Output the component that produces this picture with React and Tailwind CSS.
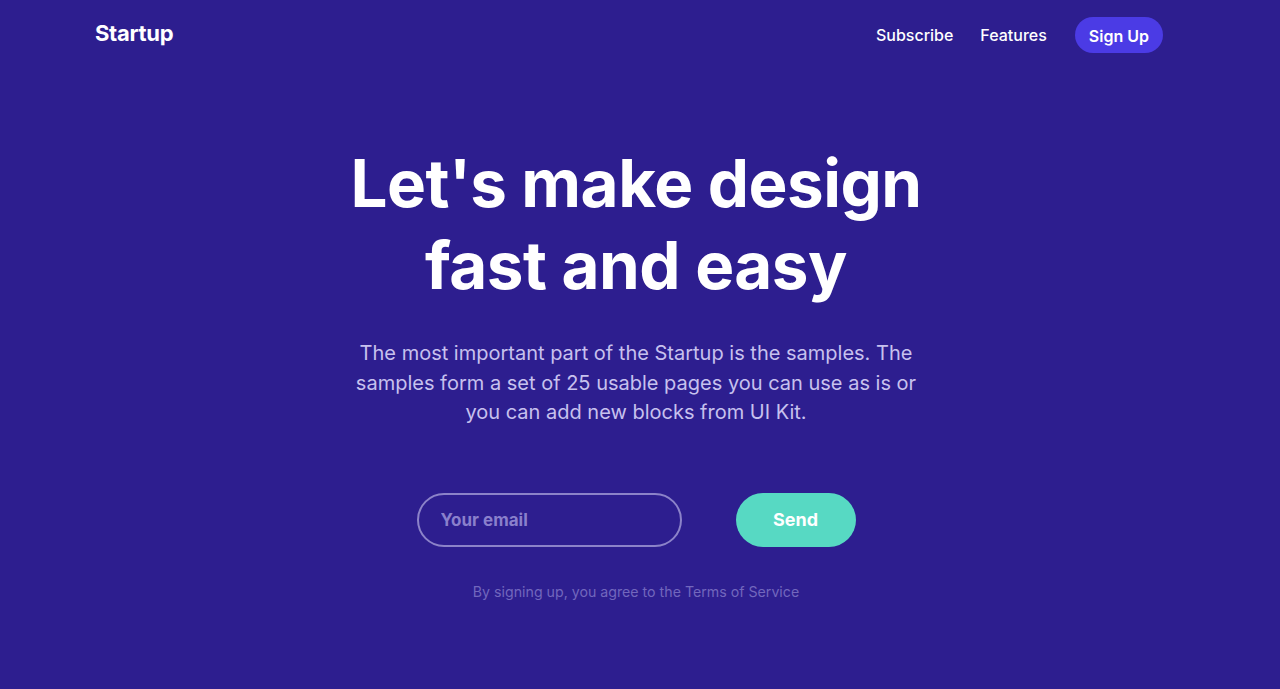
export default function App() {
  return (
    <div className="min-h-[689px] bg-[#2d1e8f] text-white" style={{ fontFamily: 'Inter, "Noto Sans", sans-serif' }}>
      <header className="flex items-center justify-between pl-[95px] pr-[117px] pt-[17px]">
        <a href="#" className="pb-[3px] text-[22px] font-bold tracking-[-0.3px]">Startup</a>
        <nav className="flex items-center text-[16px] font-medium">
          <a href="#" className="mr-[27px]">Subscribe</a>
          <a href="#" className="mr-[28px]">Features</a>
          <a href="#" className="flex h-[36px] items-center rounded-full bg-[#4b3be5] px-[14px] pt-[1px] text-[16px] font-semibold">Sign Up</a>
        </nav>
      </header>

      <main className="flex flex-col items-center pr-[8px] pt-[90px] text-center">
        <h1 className="text-[65.5px] font-bold leading-[82px] tracking-[-0.5px]">
          Let's make design
          <br />
          fast and easy
        </h1>
        <p className="mt-[32px] max-w-[576px] text-[20px] leading-[29.5px] text-[#c7c1ee]">
          The most important part of the Startup is the samples. The samples form a set of 25 usable pages you can use as is or you can add new blocks from UI Kit.
        </p>

        <form className="mt-[65px] flex items-center gap-[54px]" onSubmit={(e) => e.preventDefault()}>
          <input
            type="email"
            placeholder="Your email"
            className="h-[54px] w-[265px] rounded-full border-2 border-[#8c83c9] bg-transparent px-[22px] text-[17px] font-bold text-white outline-none placeholder:text-[#8a80cc]"
          />
          <button type="submit" className="h-[54px] w-[120px] rounded-full bg-[#57d9c3] text-[18px] font-bold text-white">
            Send
          </button>
        </form>

        <p className="mt-[34px] text-[14.2px] text-[#7267bd]">By signing up, you agree to the Terms of Service</p>
      </main>
    </div>
  );
}
